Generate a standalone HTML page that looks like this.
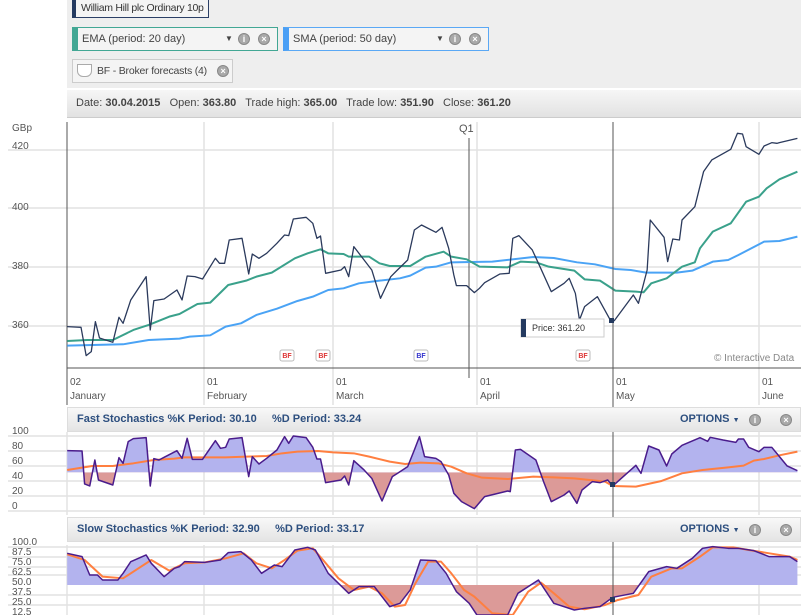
<!DOCTYPE html>
<html><head><meta charset="utf-8"><style>
html,body{margin:0;width:801px;height:615px;overflow:hidden}
body{background:#fff;font-family:"Liberation Sans",sans-serif;position:relative}
.a{position:absolute}
.box{position:absolute;background:#f4f4f4;border:1px solid #ccc;font-size:11px;color:#444;box-sizing:border-box;line-height:22px;white-space:nowrap}
.ic{position:absolute;width:12px;height:12px;border-radius:50%;background:#a9a9a9;border:1px solid #888;box-sizing:border-box;color:#fff;font-size:9px;line-height:10px;text-align:center;font-weight:bold}
.hdr{position:absolute;left:67px;width:734px;height:25px;background:linear-gradient(#f8f8f8,#e4e4e4);border:1px solid #ddd;box-sizing:border-box;font-size:11px;color:#2d4f7f;font-weight:bold;line-height:23px;white-space:nowrap}
</style></head><body>
<div class="a" style="left:67px;top:0;width:734px;height:88px;background:#eee"></div>
<div class="box" style="left:72px;top:-2px;width:137px;height:20px;border-color:#2b3f66;border-left:4px solid #243a60;line-height:18px;padding-left:5px;color:#333;font-size:10.5px;letter-spacing:-0.3px">William Hill plc Ordinary 10p</div>
<div class="box" style="left:72px;top:27px;width:206px;height:24px;border-color:#42a794;border-left:6px solid #42a794;padding-left:4px">EMA (period: 20 day)<span class="a" style="left:147px;font-size:8px">▼</span><span class="ic" style="left:160px;top:5px">i</span><span class="ic" style="left:180px;top:5px">×</span></div>
<div class="box" style="left:283px;top:27px;width:206px;height:24px;border-color:#5aa8f5;border-left:6px solid #4a9ff5;padding-left:4px">SMA (period: 50 day)<span class="a" style="left:147px;font-size:8px">▼</span><span class="ic" style="left:160px;top:5px">i</span><span class="ic" style="left:180px;top:5px">×</span></div>
<div class="box" style="left:72px;top:59px;width:161px;height:24px;padding-left:24px;font-size:10.5px;letter-spacing:-0.2px">BF - Broker forecasts (4)<span class="a" style="left:4px;top:4px;width:13px;height:11px;border:1px solid #aaa;border-radius:0 0 6px 6px;background:#fff"></span><span class="ic" style="left:144px;top:5px">×</span></div>
<div class="a" style="left:67px;top:90px;width:725px;height:27px;background:linear-gradient(#f6f6f6,#e2e2e2);border-bottom:1px solid #ccc;font-size:11px;color:#444;line-height:27px;padding-left:9px;white-space:nowrap">Date: <b>30.04.2015</b>&nbsp;&nbsp; Open: <b>363.80</b>&nbsp;&nbsp; Trade high: <b>365.00</b>&nbsp;&nbsp; Trade low: <b>351.90</b>&nbsp;&nbsp; Close: <b>361.20</b></div>

<svg class="a" style="left:0;top:0" width="801" height="615" font-family="Liberation Sans, sans-serif">
<defs>
<clipPath id="fa2"><rect x="0" y="0" width="1600" height="337"/></clipPath>
<clipPath id="fb2"><rect x="0" y="337" width="1600" height="300"/></clipPath>
<clipPath id="sa2"><rect x="0" y="0" width="1600" height="675"/></clipPath>
<clipPath id="sb2"><rect x="0" y="675" width="1600" height="300"/></clipPath>
</defs>
<g stroke="#e2e2e2" stroke-width="1.5">
<line x1="8" y1="150" x2="801" y2="150"/><line x1="8" y1="208" x2="801" y2="208"/><line x1="8" y1="267" x2="801" y2="267"/><line x1="8" y1="326" x2="801" y2="326"/>
<line x1="204" y1="122" x2="204" y2="405"/><line x1="333" y1="122" x2="333" y2="405"/><line x1="477" y1="122" x2="477" y2="405"/><line x1="759" y1="122" x2="759" y2="405"/>
</g>
<line x1="67" y1="122" x2="67" y2="405" stroke="#555"/>
<line x1="67" y1="368" x2="801" y2="368" stroke="#555"/>
<line x1="469" y1="138" x2="469" y2="378" stroke="#555"/>
<g font-size="10" fill="#555">
<text x="12" y="131">GBp</text><text x="12" y="149">420</text><text x="12" y="210">400</text><text x="12" y="269">380</text><text x="12" y="328">360</text>
<text x="459" y="132" font-size="11">Q1</text>
<text x="714" y="361" fill="#888">© Interactive Data</text>
<text x="70" y="385">02</text><text x="70" y="399">January</text>
<text x="207" y="385">01</text><text x="207" y="399">February</text>
<text x="336" y="385">01</text><text x="336" y="399">March</text>
<text x="480" y="385">01</text><text x="480" y="399">April</text>
<text x="616" y="385">01</text><text x="616" y="399">May</text>
<text x="762" y="385">01</text><text x="762" y="399">June</text>
</g>
<g transform="translate(0,110) scale(0.5128,0.3333)" fill="none" stroke-linejoin="round">
<polyline vector-effect="non-scaling-stroke" stroke="#4aa3f5" stroke-width="2" points="131,707 240,703 290,690 350,686 370,680 410,676 440,650 470,640 500,615 540,596 580,573 610,560 640,540 670,535 700,520 740,512 780,505 800,497 830,473 850,470 880,457 960,455 1040,441 1080,444 1125,457 1160,463 1200,477 1230,480 1260,488 1320,488 1350,482 1390,455 1420,450 1440,435 1490,395 1520,393 1555,380"/>
<polyline vector-effect="non-scaling-stroke" stroke="#3aa18b" stroke-width="2" points="131,693 170,690 220,690 260,660 290,645 330,620 350,612 385,582 410,578 445,525 480,512 500,500 530,488 575,445 600,430 625,418 640,430 670,432 680,440 720,440 740,460 760,468 800,468 830,440 865,425 880,440 910,448 935,470 990,472 1015,455 1045,457 1070,470 1120,482 1140,508 1170,512 1200,542 1240,545 1255,547 1270,520 1300,505 1330,470 1355,457 1365,415 1390,365 1425,340 1455,275 1480,260 1495,235 1520,208 1555,185"/>
<polyline vector-effect="non-scaling-stroke" stroke="#2b3a5c" stroke-width="1.3" points="131,650 158,652 168,737 178,725 186,635 194,684 220,697 232,622 240,640 255,570 285,500 293,660 300,572 320,567 345,540 355,570 365,498 380,500 395,507 420,445 428,460 438,460 447,390 472,385 485,492 492,432 505,445 520,430 540,400 555,375 563,377 572,327 597,322 610,340 618,385 625,378 635,490 665,480 672,470 680,500 690,410 710,450 725,480 742,565 762,500 775,480 795,450 808,360 822,345 850,367 862,352 875,415 885,495 890,527 910,527 925,548 935,535 945,518 975,492 993,490 1000,385 1012,377 1038,420 1050,460 1075,545 1100,520 1110,505 1122,550 1130,630 1140,590 1165,560 1190,630 1198,632 1235,555 1245,580 1262,480 1268,330 1295,382 1302,455 1312,387 1325,390 1330,330 1355,290 1372,185 1388,150 1425,118 1438,70 1448,72 1455,110 1480,133 1490,108 1505,98 1515,100 1520,98 1555,85"/>
</g>
<rect x="521" y="319" width="83" height="18" fill="#fff" stroke="#ccc"/>
<rect x="521" y="319" width="5" height="18" fill="#243a60"/>
<text x="532" y="331" font-size="9" fill="#333">Price: 361.20</text>
<g font-size="7" font-weight="bold" text-anchor="middle">
<rect x="280" y="350" width="14" height="11" rx="2" fill="#fff" stroke="#bbb"/><text x="287" y="358" fill="#d33">BF</text>
<rect x="316" y="350" width="14" height="11" rx="2" fill="#fff" stroke="#bbb"/><text x="323" y="358" fill="#d33">BF</text>
<rect x="414" y="350" width="14" height="11" rx="2" fill="#fff" stroke="#bbb"/><text x="421" y="358" fill="#33c">BF</text>
<rect x="576" y="350" width="14" height="11" rx="2" fill="#fff" stroke="#bbb"/><text x="583" y="358" fill="#d33">BF</text>
</g>

<g stroke="#e2e2e2" stroke-width="1.5">
<line x1="8" y1="436" x2="801" y2="436"/><line x1="8" y1="451" x2="801" y2="451"/><line x1="8" y1="466" x2="801" y2="466"/><line x1="8" y1="481" x2="801" y2="481"/><line x1="8" y1="496" x2="801" y2="496"/><line x1="8" y1="511" x2="801" y2="511"/>
<line x1="8" y1="547" x2="801" y2="547"/><line x1="8" y1="557" x2="801" y2="557"/><line x1="8" y1="567" x2="801" y2="567"/><line x1="8" y1="575" x2="801" y2="575"/><line x1="8" y1="595" x2="801" y2="595"/><line x1="8" y1="605" x2="801" y2="605"/>
<line x1="67" y1="432" x2="67" y2="515"/><line x1="204" y1="432" x2="204" y2="515"/><line x1="333" y1="432" x2="333" y2="515"/><line x1="477" y1="432" x2="477" y2="515"/><line x1="759" y1="432" x2="759" y2="515"/>
<line x1="67" y1="545" x2="67" y2="615"/><line x1="204" y1="545" x2="204" y2="615"/><line x1="333" y1="545" x2="333" y2="615"/><line x1="477" y1="545" x2="477" y2="615"/><line x1="759" y1="545" x2="759" y2="615"/>
</g>
<g font-size="10" fill="#555">
<text x="12" y="434">100</text><text x="12" y="449">80</text><text x="12" y="464">60</text><text x="12" y="479">40</text><text x="12" y="494">20</text><text x="12" y="509">0</text>
<text x="12" y="545">100.0</text><text x="12" y="555">87.5</text><text x="12" y="565">75.0</text><text x="12" y="575">62.5</text><text x="12" y="585">50.0</text><text x="12" y="595">37.5</text><text x="12" y="605">25.0</text><text x="12" y="615">12.5</text>
</g>
<g transform="translate(0,360) scale(0.5128,0.3333)" stroke-linejoin="round" fill="none">
<polygon clip-path="url(#fa2)" fill="#b3b3ee" points="131,337 131,272 160,273 165,372 175,378 185,300 192,360 220,375 232,293 240,310 250,245 260,236 285,233 293,378 300,296 310,300 320,292 345,272 355,295 365,235 375,298 395,298 420,242 430,265 440,262 447,237 472,233 485,350 492,290 505,312 520,295 540,270 555,230 563,250 572,228 597,233 610,262 618,297 625,297 635,368 665,360 672,348 680,375 690,302 710,330 725,355 745,423 765,350 775,340 795,320 808,270 818,230 828,290 850,295 860,305 875,345 885,400 900,425 925,446 945,410 990,393 995,395 1005,270 1015,268 1045,300 1060,365 1075,425 1100,405 1110,393 1125,430 1135,390 1155,365 1170,368 1185,360 1195,378 1240,316 1250,340 1265,258 1285,270 1300,318 1310,282 1330,256 1365,233 1380,244 1385,232 1410,240 1435,247 1440,237 1450,237 1460,262 1480,275 1490,262 1505,262 1520,290 1535,318 1555,332 1555,337"/>
<polygon clip-path="url(#fb2)" fill="#dc9a98" points="131,337 131,272 160,273 165,372 175,378 185,300 192,360 220,375 232,293 240,310 250,245 260,236 285,233 293,378 300,296 310,300 320,292 345,272 355,295 365,235 375,298 395,298 420,242 430,265 440,262 447,237 472,233 485,350 492,290 505,312 520,295 540,270 555,230 563,250 572,228 597,233 610,262 618,297 625,297 635,368 665,360 672,348 680,375 690,302 710,330 725,355 745,423 765,350 775,340 795,320 808,270 818,230 828,290 850,295 860,305 875,345 885,400 900,425 925,446 945,410 990,393 995,395 1005,270 1015,268 1045,300 1060,365 1075,425 1100,405 1110,393 1125,430 1135,390 1155,365 1170,368 1185,360 1195,378 1240,316 1250,340 1265,258 1285,270 1300,318 1310,282 1330,256 1365,233 1380,244 1385,232 1410,240 1435,247 1440,237 1450,237 1460,262 1480,275 1490,262 1505,262 1520,290 1535,318 1555,332 1555,337"/>
<polyline vector-effect="non-scaling-stroke" stroke="#ff7f40" stroke-width="2" points="131,330 160,323 180,318 220,318 260,310 300,300 340,296 360,292 400,292 440,292 480,290 520,288 550,280 580,275 620,273 650,277 690,280 720,290 760,305 790,312 820,308 855,310 880,320 910,340 940,353 990,357 1040,350 1080,352 1120,355 1150,360 1180,365 1195,378 1240,380 1290,363 1330,340 1370,330 1420,322 1450,317 1470,302 1490,297 1520,286 1555,275"/>
<polyline vector-effect="non-scaling-stroke" stroke="#4a1c8c" stroke-width="1.5" points="131,272 160,273 165,372 175,378 185,300 192,360 220,375 232,293 240,310 250,245 260,236 285,233 293,378 300,296 310,300 320,292 345,272 355,295 365,235 375,298 395,298 420,242 430,265 440,262 447,237 472,233 485,350 492,290 505,312 520,295 540,270 555,230 563,250 572,228 597,233 610,262 618,297 625,297 635,368 665,360 672,348 680,375 690,302 710,330 725,355 745,423 765,350 775,340 795,320 808,270 818,230 828,290 850,295 860,305 875,345 885,400 900,425 925,446 945,410 990,393 995,395 1005,270 1015,268 1045,300 1060,365 1075,425 1100,405 1110,393 1125,430 1135,390 1155,365 1170,368 1185,360 1195,378 1240,316 1250,340 1265,258 1285,270 1300,318 1310,282 1330,256 1365,233 1380,244 1385,232 1410,240 1435,247 1440,237 1450,237 1460,262 1480,275 1490,262 1505,262 1520,290 1535,318 1555,332"/>
<polygon clip-path="url(#sa2)" fill="#b3b3ee" points="131,675 131,580 160,590 175,645 190,645 200,660 230,660 240,640 255,605 285,585 295,610 320,650 340,625 350,620 360,605 400,607 430,600 445,578 470,575 490,600 510,640 535,615 550,620 575,570 600,562 615,570 640,640 680,700 700,680 730,680 760,740 780,730 800,690 820,600 850,602 870,640 890,695 915,730 930,765 990,765 1010,700 1050,660 1080,730 1120,750 1140,745 1170,740 1195,712 1235,700 1265,635 1300,620 1320,625 1350,595 1370,565 1390,560 1420,565 1440,565 1470,572 1500,590 1540,590 1555,605 1555,675"/>
<polygon clip-path="url(#sb2)" fill="#dc9a98" points="131,675 131,580 160,590 175,645 190,645 200,660 230,660 240,640 255,605 285,585 295,610 320,650 340,625 350,620 360,605 400,607 430,600 445,578 470,575 490,600 510,640 535,615 550,620 575,570 600,562 615,570 640,640 680,700 700,680 730,680 760,740 780,730 800,690 820,600 850,602 870,640 890,695 915,730 930,765 990,765 1010,700 1050,660 1080,730 1120,750 1140,745 1170,740 1195,712 1235,700 1265,635 1300,620 1320,625 1350,595 1370,565 1390,560 1420,565 1440,565 1470,572 1500,590 1540,590 1555,605 1555,675"/>
<polyline vector-effect="non-scaling-stroke" stroke="#ff7f40" stroke-width="2" points="131,583 165,600 200,650 240,655 270,625 295,600 330,632 360,610 400,607 440,595 475,580 500,610 530,625 555,600 580,572 610,565 630,600 660,655 690,690 720,680 745,700 770,740 790,735 810,670 835,605 860,605 880,640 905,690 925,710 960,760 1000,765 1030,695 1055,668 1080,700 1110,740 1140,748 1180,735 1205,720 1245,705 1270,650 1310,625 1330,625 1365,590 1390,562 1430,562 1460,570 1500,580 1540,590 1555,600"/>
<polyline vector-effect="non-scaling-stroke" stroke="#4a1c8c" stroke-width="1.5" points="131,580 160,590 175,645 190,645 200,660 230,660 240,640 255,605 285,585 295,610 320,650 340,625 350,620 360,605 400,607 430,600 445,578 470,575 490,600 510,640 535,615 550,620 575,570 600,562 615,570 640,640 680,700 700,680 730,680 760,740 780,730 800,690 820,600 850,602 870,640 890,695 915,730 930,765 990,765 1010,700 1050,660 1080,730 1120,750 1140,745 1170,740 1195,712 1235,700 1265,635 1300,620 1320,625 1350,595 1370,565 1390,560 1420,565 1440,565 1470,572 1500,590 1540,590 1555,605"/>
</g>
<line x1="613" y1="122" x2="613" y2="615" stroke="#555"/>
<rect x="609" y="318" width="5" height="5" fill="#243a60"/>
<rect x="610" y="482" width="5" height="5" fill="#243a60"/>
<rect x="610" y="597" width="5" height="5" fill="#243a60"/>
</svg>

<div class="hdr" style="top:407px;padding-left:9px">Fast Stochastics %K Period: 30.10&nbsp;&nbsp;&nbsp;&nbsp; %D Period: 33.24<span class="a" style="left:612px">OPTIONS <span style="font-size:7px">▼</span></span><span class="ic" style="left:681px;top:6px">i</span><span class="ic" style="left:712px;top:6px">×</span></div>
<div class="hdr" style="top:517px;padding-left:9px">Slow Stochastics %K Period: 32.90&nbsp;&nbsp;&nbsp;&nbsp; %D Period: 33.17<span class="a" style="left:612px">OPTIONS <span style="font-size:7px">▼</span></span><span class="ic" style="left:681px;top:6px">i</span><span class="ic" style="left:712px;top:6px">×</span></div>
</body></html>
